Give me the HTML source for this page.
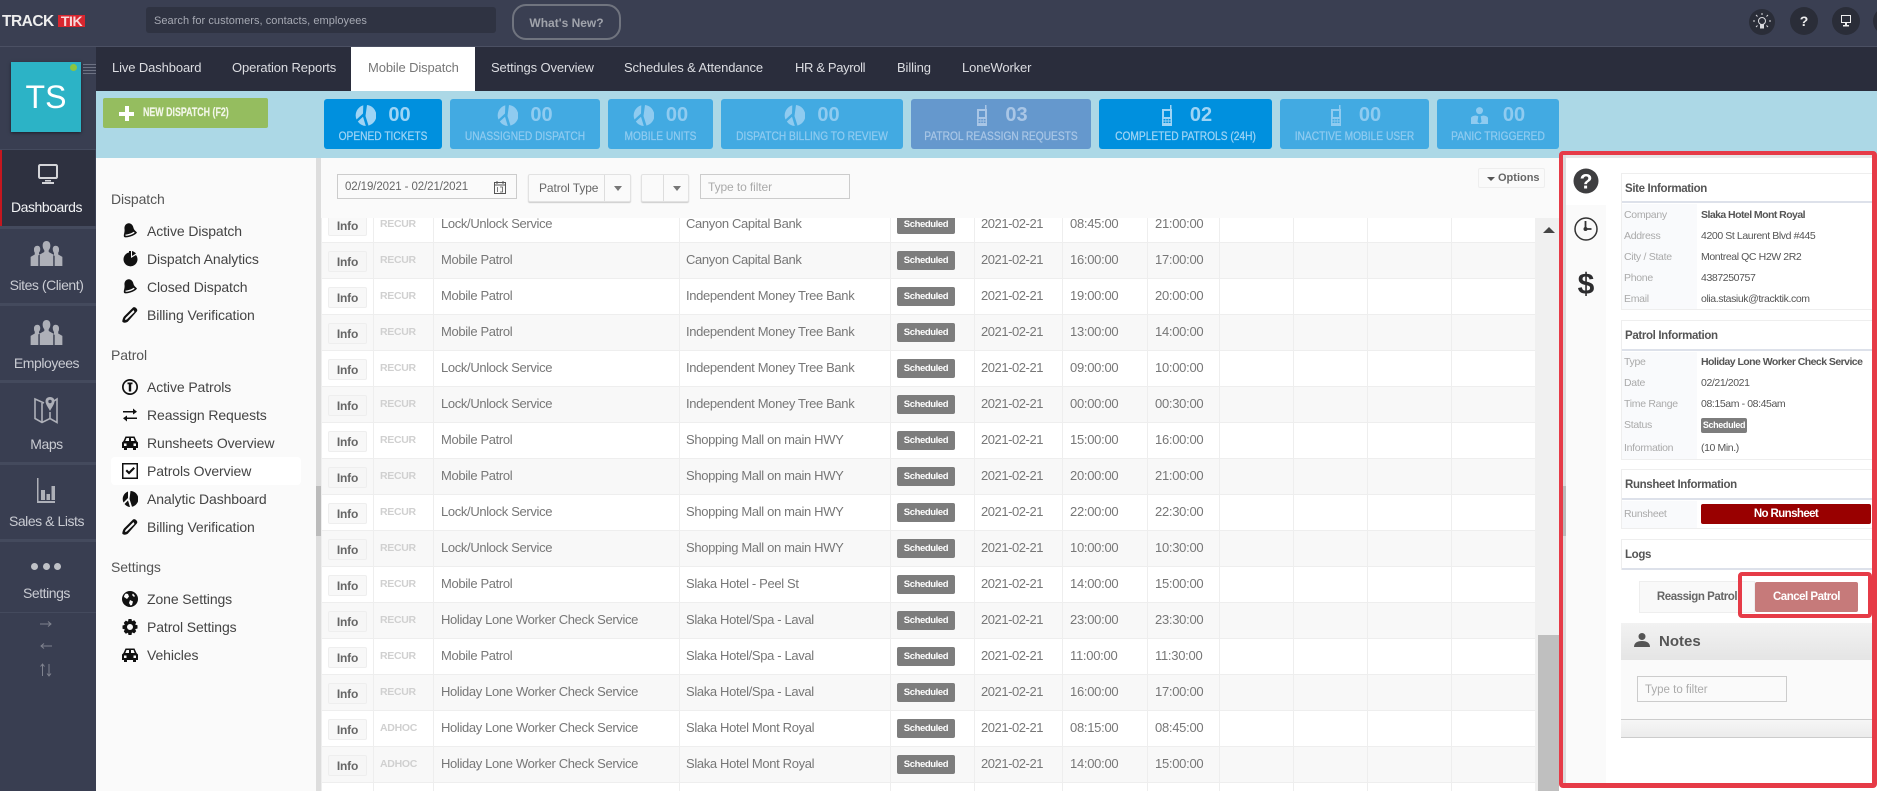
<!DOCTYPE html>
<html><head><meta charset="utf-8"><title>TrackTik Mobile Dispatch</title>
<style>
*{box-sizing:border-box}
html,body{margin:0;padding:0;width:1877px;height:791px;overflow:hidden;background:#fff;font-family:"Liberation Sans",sans-serif}
.a{position:absolute}
.t{position:absolute;white-space:nowrap;line-height:16px}
#top{left:0;top:0;width:1877px;height:47px;background:#3a3f52;border-bottom:1px solid #4b5063}
#nav{left:96px;top:47px;width:1781px;height:44px;background:#2a2d3c}
#nav .t{top:13px;font-size:13px;color:#dcdde2;letter-spacing:-.12px}
#side{left:0;top:47px;width:96px;height:744px;background:#393e51}
.sl{position:absolute;left:0;width:96px;height:3px;background:#444a5d}
.sn{position:absolute;left:0;width:93px;text-align:center;font-size:14px;line-height:16px;color:#c9cbd2;letter-spacing:-.45px}
#band{left:96px;top:91px;width:1781px;height:67px;background:#acd8e6}
.w{position:absolute;top:99px;height:50px;border-radius:3px;background:#42aae2;color:#8fcbf0;text-align:center}
.w.on{background:#0090de;color:#9ed4f5}
.w.g{background:#6598cd;color:#a9c6e6}
.w .r{position:absolute;left:0;right:0;top:5px;height:22px;display:flex;justify-content:center;align-items:center;gap:12px;font-size:20px;font-weight:bold;line-height:22px}
.w .r.p{gap:18px}
.w .r.p svg{margin-left:3px}
.w .l{position:absolute;left:-20px;right:-20px;top:29px;font-size:12px;line-height:16px;white-space:nowrap;transform:scaleX(.85);-webkit-text-stroke:.25px currentColor}
.w svg{fill:currentColor;display:block}
#menu{left:96px;top:158px;width:220px;height:633px;background:#fafafa}
.mh{position:absolute;left:15px;font-size:14px;line-height:16px;color:#555;white-space:nowrap;letter-spacing:-.1px}
.mi{position:absolute;left:51px;font-size:14px;line-height:16px;color:#444;white-space:nowrap;letter-spacing:-.1px}
.ic{position:absolute;left:26px;width:16px;height:16px;fill:#111}
#tb{left:322px;top:218px;width:1213px;height:573px;overflow:hidden;background:#fff}
.row{position:absolute;left:0;width:1213px;height:36px;display:grid;grid-template-columns:52px 60px 246px 211px 84px 88px 85px 72px 74px 74px 84px 83px;grid-template-rows:35px;border-top:1px solid #eee;font-size:13px;color:#777;letter-spacing:-.35px}
.row::before{content:"";border-right:1px solid #eee}
.row.e{background:#f8f8f8}
.row>div{border-right:1px solid #eee;position:relative;white-space:nowrap;line-height:16px;padding-top:9px;padding-left:7px}
.row>div:last-child{border-right:0}
.row>div:nth-child(4){padding-left:6px}
.row>div:nth-child(6){letter-spacing:-.45px;padding-left:6px}
.row>div:nth-child(7),.row>div:nth-child(8){letter-spacing:-.28px}
.row .b{position:absolute;left:6px;top:8px;width:39px;height:21px;background:#f8f8f8;border:1px solid #eee;border-radius:2px;color:#666;font-size:12px;font-weight:bold;line-height:20px;text-align:center;padding:0;letter-spacing:-.2px}
.row.e .b{background:#f6f6f6}
.row .k{font-size:10.5px;font-weight:bold;color:#d0d0d0;letter-spacing:-.3px;padding-left:6px;grid-column:2}
.s{position:absolute;left:6px;top:8px;width:58px;height:19px;background:#7d7d7d;border-radius:2px;color:#fff;font-size:9.5px;font-weight:bold;line-height:20px;text-align:center;letter-spacing:-.4px}
.ctl{position:absolute;background:#fafafa;font-size:12px;color:#666;white-space:nowrap;line-height:16px}
#rp{left:1559px;top:151px;width:318px;height:637px;border:4px solid #e63b47;border-radius:4px;background:#fff;border-right-width:5px;border-bottom-width:5px}
.pn{position:absolute;left:1621px;width:251px;border-left:1px solid #eee;border-top:1px solid #eee;border-bottom:1px solid #eee}
.pt{position:absolute;left:1625px;font-size:11.5px;font-weight:bold;color:#555;line-height:16px;white-space:nowrap;letter-spacing:-.35px}
.lb{position:absolute;left:1624px;font-size:10.5px;color:#aaa;line-height:14px;white-space:nowrap;letter-spacing:-.3px}
.vl{position:absolute;left:1701px;font-size:10.5px;color:#555;line-height:14px;white-space:nowrap;letter-spacing:-.4px}
.vl.bd{font-weight:bold;letter-spacing:-.55px}
.hr{position:absolute;left:1622px;width:250px;height:2px;background:#dde1ea}
.lc{position:absolute;left:1622px;width:75px;background:#f9fafc}
</style></head><body>

<svg width="0" height="0" style="position:absolute">
<defs>
<symbol id="pie" viewBox="0 0 21 21"><path d="M12 0a10.500 10.500 0 0 1 1.500 20.600L10.500 11z"/><path d="M8.300 .3 8 8.500 1.500 14.500A10.500 10.500 0 0 1 8.300 .3z"/><path d="M2.800 16.500 8 11.800 10.800 21a10.500 10.500 0 0 1-8-4.500z"/></symbol>
<symbol id="phone" viewBox="0 0 10 21"><path fill-rule="evenodd" d="M8 0h1.500v4H10v17H0V4h8zM2 6v6h6V6zM1.500 14v1.500h2V14zm2.700 0v1.500h1.700V14zm2.400 0v1.500h2V14zM1.500 16.500V18h2v-1.500zm2.700 0V18h1.700v-1.500zm2.400 0V18h2v-1.500z"/></symbol>
<symbol id="man" viewBox="0 0 21 21"><circle cx="10.500" cy="4.500" r="4.300"/><path d="M0 21v-7c0-2 2-3 6-3.500l3 1-1 7 2.500 2 2.500-2-1-7 3-1c4 .5 6 1.500 6 3.500v7z"/></symbol>
<symbol id="bell" viewBox="0 0 16 16"><path d="M2.500 6C2 2 5-.5 8 .5c2 .6 3 2.200 3.500 4.500.4 1.800 2 3 3.500 4.500-1 1.800-3.500 3-6.500 4-3 1-5.500 1.300-6.500.2C1.200 12 3 9.500 2.500 6z"/><path fill="#fafafa" d="M3.500 11.500c2.500 0 5.500-1 8.200-2.700l1 .9c-2.500 1.800-6.500 3.300-9.200 3z"/></symbol>
<symbol id="pc" viewBox="0 0 16 16"><path d="M9 0v7l5-3a7 7 0 1 1-7-2.500V0z"/><path d="M10 0c2 .5 3 1.500 4 2.500L10 5z"/></symbol>
<symbol id="pen" viewBox="0 0 16 16"><path fill-rule="evenodd" d="M11 .5c1-.8 2.500-.2 3.500 1s1 2.200.3 3L6 14.500c-1 1-3.500 1.500-4.500 1s-1.500-.5-1-2.500 1-3 2-4zM11.500 3 4 10.500c-.8 1-1 1.700-1 2.300.6.200 1.500 0 2-.5L12.500 5z"/></symbol>
<symbol id="info" viewBox="0 0 16 16"><path fill-rule="evenodd" d="M8 0a8 8 0 1 1 0 16A8 8 0 0 1 8 0zm0 1.700a6.300 6.300 0 1 0 0 12.600A6.300 6.300 0 0 0 8 1.700z"/><path d="M5.500 3.500h5v1.800H9.200V12.500H6.800V5.300H5.500z"/></symbol>
<symbol id="swap" viewBox="0 0 16 16"><path d="M1 4h10V1.500L15 4.800 11 7.500V5.500H1zM15 10.500H5V8.500L1 11.300 5 14.500V12h10z"/></symbol>
<symbol id="car" viewBox="0 0 16 16"><path fill-rule="evenodd" d="M3.500 1.500h9L14.500 6 16 7.500V13h-2v2h-3v-2H5v2H2v-2H0V7.500L1.500 6zm1 1.500L3.300 6H7V3zM9 3v3h3.700L11.500 3zM2 8.500V11h2.500V8.500zm9.500 0V11H14V8.500z"/></symbol>
<symbol id="chk" viewBox="0 0 16 16"><path fill-rule="evenodd" d="M0 0h16v16H0zm1.500 1.500v13h13v-13z"/><path d="M3.500 8l1.500-1.500 2 2L11.500 4 13 5.500 7 11.500z"/></symbol>
<symbol id="ana" viewBox="0 0 16 16"><path d="M9 0a8 8 0 0 1 1 15.800L7.500 8l1-8zM6 .5V7l-4.500 4.500A8 8 0 0 1 6 .5z"/><path d="M2.500 13l3.500-3.500 2 6.500a8 8 0 0 1-5.500-3z"/></symbol>
<symbol id="globe" viewBox="0 0 16 16"><path d="M8 0a8 8 0 1 1 0 16A8 8 0 0 1 8 0z"/><path fill="#fafafa" d="M4 2.500 6 3 7 5.500 5 8 2 6c0-1.500 1-3 2-3.500zM8 9l3 1.500-1 3.500-1.500.5L7 12zM11 2.500 13 5l-1 1-2-2z"/></symbol>
<symbol id="gear" viewBox="0 0 16 16"><path fill-rule="evenodd" d="M6.500 0h3l.5 2.300 2.200-1 2 2.200-1 2.100 2.300.6v3.300l-2.300.6 1 2.100-2 2.200-2.200-1L9.500 16h-3L6 13.700l-2.200 1-2-2.200 1-2.100L.5 9.800V6.500l2.300-.6-1-2.100 2-2.200 2.200 1zM8 5a3 3 0 1 0 0 6 3 3 0 0 0 0-6z"/></symbol>
<symbol id="ppl" viewBox="0 0 33 26"><path d="M16.500 0c2.600 0 4 2 4 4.800 0 1.900-.6 3.600-1.700 4.700v2l4.700 2.500V26h-14V14l4.700-2.500v-2c-1.100-1.100-1.700-2.800-1.700-4.700 0-2.800 1.400-4.800 4-4.800z"/><path d="M7 5c2 0 3 1.500 3 3.500 0 1.500-.5 2.800-1.300 3.600v1.400l1 .5-1.700 1V26H0v-9.500L4.300 14v-1.900C3.500 11.300 3.500 10 3.500 8.500 3.500 6.500 5 5 7 5zM26 5c2 0 3.500 1.500 3.500 3.500 0 1.500 0 2.800-.8 3.600V14l4.300 2.500V26h-8V15.500l-1.700-1 1-.5v-1.400C23.500 11.300 23 10 23 8.500 23 6.500 24 5 26 5z"/></symbol>
</defs></svg>

<!-- top bar -->
<div class="a" id="top"></div>
<div class="t" style="left:2px;top:15px;font-size:15.5px;font-weight:bold;color:#eee;letter-spacing:-.5px;line-height:13px">TRACK</div>
<div class="t" style="left:58px;top:15px;width:27px;height:12px;background:#d8262f;color:#f6d8da;font-size:14px;font-weight:bold;line-height:12px;text-align:center;letter-spacing:-.4px">TIK</div>
<div class="a" style="left:146px;top:7px;width:350px;height:26px;background:#2f3342;border-radius:3px"></div>
<div class="t" style="left:154px;top:13px;font-size:11px;color:#a6a9b3;letter-spacing:.05px">Search for customers, contacts, employees</div>
<div class="a" style="left:512px;top:4px;width:109px;height:36px;border:2px solid #70747f;border-radius:14px;color:#a0a3ab;font-size:12px;font-weight:bold;text-align:center;line-height:34px">What's New?</div>
<div class="a" style="left:1749px;top:9px;width:26px;height:26px;border-radius:50%;background:#2a2d38"></div>
<svg class="a" style="left:1752px;top:12px" width="20" height="20" viewBox="0 0 20 20" fill="none" stroke="#d9dade" stroke-width="1"><circle cx="10" cy="9" r="3.500"/><path d="M8.500 13h3v3h-3z" fill="#d9dade"/><path d="M10 1v2M3 9H1M19 9h-2M4 3l1.500 1.500M16 3l-1.500 1.500M4 15l1.500-1.500M16 15l-1.500-1.500"/></svg>
<div class="a" style="left:1790px;top:7px;width:28px;height:28px;border-radius:50%;background:#2a2d38;color:#eee;font-size:14px;font-weight:bold;text-align:center;line-height:28px">?</div>
<div class="a" style="left:1832px;top:7px;width:28px;height:28px;border-radius:50%;background:#2a2d38"></div>
<svg class="a" style="left:1840px;top:15px" width="12" height="12" viewBox="0 0 12 12" fill="#eee"><path fill-rule="evenodd" d="M1 0h10v8H1zm1 1v6h8V1zM3 10h6v1.500H3zM5 8h2v2H5z"/></svg>
<div class="a" style="left:1873px;top:7px;width:28px;height:28px;border-radius:50%;background:#2a2d38"></div>

<!-- nav -->
<div class="a" id="nav">
<div class="t" style="left:16px">Live Dashboard</div>
<div class="t" style="left:136px">Operation Reports</div>
<div class="a" style="left:255px;top:0;width:124px;height:44px;background:#fff"></div>
<div class="t" style="left:272px;color:#777">Mobile Dispatch</div>
<div class="t" style="left:395px">Settings Overview</div>
<div class="t" style="left:528px">Schedules &amp; Attendance</div>
<div class="t" style="left:699px;letter-spacing:-.35px">HR &amp; Payroll</div>
<div class="t" style="left:801px">Billing</div>
<div class="t" style="left:866px">LoneWorker</div>
</div>

<!-- sidebar -->
<div class="a" id="side"></div>
<div class="a" style="left:11px;top:62px;width:70px;height:70px;background:#2cb3c6;box-shadow:0 1px 3px rgba(0,0,0,.5);color:#fff;font-size:32px;line-height:70px;text-align:center">TS</div>
<div class="a" style="left:70px;top:64px;width:7px;height:7px;border-radius:50%;background:#8dc63f"></div>
<div class="a" style="left:83px;top:64px;width:13px;height:10px;background:repeating-linear-gradient(#6d7283 0 1px,#393e51 1px 3px)"></div>
<div class="a" style="left:0;top:149px;width:96px;height:1px;background:#444a5d"></div>
<div class="a" style="left:0;top:150px;width:95px;height:76px;background:#2e3140;border-left:2px solid #c5171f"></div>
<div class="sl" style="top:226px"></div><div class="sl" style="top:303px"></div><div class="sl" style="top:380px"></div><div class="sl" style="top:462px"></div><div class="sl" style="top:539px"></div><div class="a" style="left:0;top:612px;width:96px;height:1px;background:#444a5d"></div>
<svg class="a" style="left:37px;top:163px" width="22" height="22" viewBox="0 0 22 22" fill="#d4d5d9"><path fill-rule="evenodd" d="M3 1h16c1 0 2 1 2 2v11c0 1-1 2-2 2H3c-1 0-2-1-2-2V3c0-1 1-2 2-2zm.500 2C3 3 3 3.500 3 3.500v10c0 .5.500.5.500.5h15s.5 0 .5-.5v-10s0-.5-.5-.5zM8 17h6v1.500H8zM5 19h12v2H5z"/></svg>
<div class="sn" style="top:199px;color:#f2f3f5">Dashboards</div>
<svg class="a" style="left:30px;top:241px;fill:#aeb0b8" width="33" height="25"><use href="#ppl"/></svg>
<div class="sn" style="top:277px">Sites (Client)</div>
<svg class="a" style="left:30px;top:320px;fill:#aeb0b8" width="33" height="25"><use href="#ppl"/></svg>
<div class="sn" style="top:355px">Employees</div>
<svg class="a" style="left:33px;top:397px" width="26" height="27" viewBox="0 0 26 27" fill="none" stroke="#aeb0b8" stroke-width="1.600"><path d="M11 6L2 2V21.500L9 25.500L17 21.500L24 25.500V2L21 4"/><path d="M9 6V25.500M17 15V21.500"/><path fill="#aeb0b8" stroke="none" d="M17 0c3 0 4.500 2 4.500 4.300 0 3-3 6.700-4.500 9.700-1.500-3-4.500-6.700-4.500-9.700C12.500 2 14 0 17 0z"/><circle cx="17" cy="4.500" r="1.700" fill="#393e51" stroke="none"/></svg>
<div class="sn" style="top:436px">Maps</div>
<svg class="a" style="left:36px;top:478px" width="20" height="26" viewBox="0 0 20 26" fill="#aeb0b8"><path d="M1 0h1.500v23H19v2H1z"/><path d="M5 12h4v10H5zM10.500 16h3.500v6h-3.500zM15.500 8H19v14h-3.500z"/></svg>
<div class="sn" style="top:513px">Sales &amp; Lists</div>
<div class="a" style="left:31px;top:563px;width:7px;height:7px;border-radius:50%;background:#bfc1c7"></div>
<div class="a" style="left:43px;top:563px;width:7px;height:7px;border-radius:50%;background:#bfc1c7"></div>
<div class="a" style="left:54px;top:563px;width:7px;height:7px;border-radius:50%;background:#bfc1c7"></div>
<div class="sn" style="top:585px">Settings</div>
<svg class="a" style="left:38px;top:618px" width="16" height="60" viewBox="0 0 16 60" fill="none" stroke="#80838f" stroke-width="1"><path d="M2 6h11M10 3.500 13 6l-3 2.500"/><path d="M14 28H3M6 25.500 3 28l3 2.500"/><path d="M4.500 58V46M2.500 48.500 4.500 46l2 2.500M11 46v12M9 55.500l2 2.500 2-2.500"/></svg>

<!-- band -->
<div class="a" id="band"></div>
<div class="a" style="left:103px;top:98px;width:165px;height:30px;background:#95bd5f;border-radius:2px"></div>
<div class="a" style="left:119px;top:106px;width:15px;height:15px;background:linear-gradient(#fff,#fff) center/100% 4px no-repeat,linear-gradient(#fff,#fff) center/4px 100% no-repeat"></div>
<div class="t" style="left:143px;top:105px;font-size:11.5px;font-weight:bold;color:#f2f6e8;transform:scaleX(.77);transform-origin:left center;-webkit-text-stroke:.2px #f2f6e8">NEW DISPATCH (F2)</div>

<div class="w on" style="left:324px;width:118px"><div class="r"><svg width="21" height="21"><use href="#pie"/></svg>00</div><div class="l">OPENED TICKETS</div></div>
<div class="w" style="left:450px;width:150px"><div class="r"><svg width="21" height="21"><use href="#pie"/></svg>00</div><div class="l">UNASSIGNED DISPATCH</div></div>
<div class="w" style="left:608px;width:105px"><div class="r"><svg width="21" height="21"><use href="#pie"/></svg>00</div><div class="l">MOBILE UNITS</div></div>
<div class="w" style="left:721px;width:182px"><div class="r"><svg width="21" height="21"><use href="#pie"/></svg>00</div><div class="l">DISPATCH BILLING TO REVIEW</div></div>
<div class="w g" style="left:911px;width:180px"><div class="r p"><svg width="10" height="21"><use href="#phone"/></svg>03</div><div class="l">PATROL REASSIGN REQUESTS</div></div>
<div class="w on" style="left:1099px;width:173px"><div class="r p"><svg width="10" height="21"><use href="#phone"/></svg>02</div><div class="l">COMPLETED PATROLS (24H)</div></div>
<div class="w" style="left:1280px;width:149px"><div class="r p"><svg width="10" height="21"><use href="#phone"/></svg>00</div><div class="l">INACTIVE MOBILE USER</div></div>
<div class="w" style="left:1437px;width:122px"><div class="r" style="gap:15px"><svg width="17" height="21"><use href="#man"/></svg>00</div><div class="l">PANIC TRIGGERED</div></div>

<!-- left menu -->
<div class="a" id="menu">
<div class="mh" style="top:33px">Dispatch</div>
<svg class="ic" style="top:65px"><use href="#bell"/></svg><div class="mi" style="top:65px">Active Dispatch</div>
<svg class="ic" style="top:93px"><use href="#pc"/></svg><div class="mi" style="top:93px">Dispatch Analytics</div>
<svg class="ic" style="top:121px"><use href="#bell"/></svg><div class="mi" style="top:121px">Closed Dispatch</div>
<svg class="ic" style="top:149px"><use href="#pen"/></svg><div class="mi" style="top:149px">Billing Verification</div>
<div class="mh" style="top:189px">Patrol</div>
<svg class="ic" style="top:221px"><use href="#info"/></svg><div class="mi" style="top:221px">Active Patrols</div>
<svg class="ic" style="top:249px"><use href="#swap"/></svg><div class="mi" style="top:249px">Reassign Requests</div>
<svg class="ic" style="top:277px"><use href="#car"/></svg><div class="mi" style="top:277px">Runsheets Overview</div>
<div class="a" style="left:15px;top:299px;width:190px;height:28px;background:#fff;border-radius:4px"></div>
<svg class="ic" style="top:305px"><use href="#chk"/></svg><div class="mi" style="top:305px">Patrols Overview</div>
<svg class="ic" style="top:333px"><use href="#ana"/></svg><div class="mi" style="top:333px">Analytic Dashboard</div>
<svg class="ic" style="top:361px"><use href="#pen"/></svg><div class="mi" style="top:361px">Billing Verification</div>
<div class="mh" style="top:401px">Settings</div>
<svg class="ic" style="top:433px"><use href="#globe"/></svg><div class="mi" style="top:433px">Zone Settings</div>
<svg class="ic" style="top:461px"><use href="#gear"/></svg><div class="mi" style="top:461px">Patrol Settings</div>
<svg class="ic" style="top:489px"><use href="#car"/></svg><div class="mi" style="top:489px">Vehicles</div>
</div>
<div class="a" style="left:316px;top:158px;width:5px;height:633px;background:#ddd"></div>
<div class="a" style="left:316px;top:486px;width:5px;height:50px;background:#bbb"></div>

<!-- filter bar -->
<div class="a" style="left:321px;top:158px;width:1238px;height:60px;background:#fafafa"></div>
<div class="ctl" style="left:337px;top:174px;width:180px;height:25px;border:1px solid #ccc;padding:4px 7px;font-size:11.5px;letter-spacing:-.1px">02/19/2021 - 02/21/2021</div>
<svg class="a" style="left:494px;top:181px" width="12" height="13" viewBox="0 0 12 13" fill="none" stroke="#555" stroke-width="1"><rect x=".5" y="1.500" width="11" height="11"/><path d="M.5 4h11M3 0v3M9 0v3"/><path d="M3.500 6v5M6 6h2.500v5H6" stroke-width=".8"/></svg>
<div class="ctl" style="left:528px;top:174px;width:103px;height:28px;border:1px solid #e2e2e2;border-radius:2px;box-shadow:0 1px 1px #ccc;padding:5px 10px;letter-spacing:-.1px">Patrol Type</div>
<div class="a" style="left:604px;top:175px;width:1px;height:26px;background:#ddd"></div>
<div class="a" style="left:614px;top:186px;border:4px solid transparent;border-top:5px solid #777"></div>
<div class="ctl" style="left:641px;top:174px;width:48px;height:28px;border:1px solid #e2e2e2;border-radius:2px;box-shadow:0 1px 1px #ccc"></div>
<div class="a" style="left:663px;top:175px;width:1px;height:26px;background:#ddd"></div>
<div class="a" style="left:673px;top:186px;border:4px solid transparent;border-top:5px solid #777"></div>
<div class="ctl" style="left:700px;top:174px;width:150px;height:25px;border:1px solid #ccc;padding:4px 7px;color:#aaa;letter-spacing:-.1px">Type to filter</div>
<div class="ctl" style="left:1478px;top:168px;width:67px;height:20px;border:1px solid #eee;border-radius:2px;font-size:11px;font-weight:bold;padding:1px 0 0 19px;color:#666">Options</div>
<div class="a" style="left:1487px;top:177px;border:4px solid transparent;border-top:4px solid #555"></div>

<!-- table -->
<div class="a" style="left:321px;top:218px;width:1px;height:573px;background:#eee"></div>
<div class="a" id="tb">
<div class="row" style="top:-12px"><div class="b">Info</div><div class="k">RECUR</div><div>Lock/Unlock Service</div><div>Canyon Capital Bank</div><div><span class="s">Scheduled</span></div><div>2021-02-21</div><div>08:45:00</div><div>21:00:00</div><div></div><div></div><div></div><div></div></div>
<div class="row e" style="top:24px"><div class="b">Info</div><div class="k">RECUR</div><div>Mobile Patrol</div><div>Canyon Capital Bank</div><div><span class="s">Scheduled</span></div><div>2021-02-21</div><div>16:00:00</div><div>17:00:00</div><div></div><div></div><div></div><div></div></div>
<div class="row" style="top:60px"><div class="b">Info</div><div class="k">RECUR</div><div>Mobile Patrol</div><div>Independent Money Tree Bank</div><div><span class="s">Scheduled</span></div><div>2021-02-21</div><div>19:00:00</div><div>20:00:00</div><div></div><div></div><div></div><div></div></div>
<div class="row e" style="top:96px"><div class="b">Info</div><div class="k">RECUR</div><div>Mobile Patrol</div><div>Independent Money Tree Bank</div><div><span class="s">Scheduled</span></div><div>2021-02-21</div><div>13:00:00</div><div>14:00:00</div><div></div><div></div><div></div><div></div></div>
<div class="row" style="top:132px"><div class="b">Info</div><div class="k">RECUR</div><div>Lock/Unlock Service</div><div>Independent Money Tree Bank</div><div><span class="s">Scheduled</span></div><div>2021-02-21</div><div>09:00:00</div><div>10:00:00</div><div></div><div></div><div></div><div></div></div>
<div class="row e" style="top:168px"><div class="b">Info</div><div class="k">RECUR</div><div>Lock/Unlock Service</div><div>Independent Money Tree Bank</div><div><span class="s">Scheduled</span></div><div>2021-02-21</div><div>00:00:00</div><div>00:30:00</div><div></div><div></div><div></div><div></div></div>
<div class="row" style="top:204px"><div class="b">Info</div><div class="k">RECUR</div><div>Mobile Patrol</div><div>Shopping Mall on main HWY</div><div><span class="s">Scheduled</span></div><div>2021-02-21</div><div>15:00:00</div><div>16:00:00</div><div></div><div></div><div></div><div></div></div>
<div class="row e" style="top:240px"><div class="b">Info</div><div class="k">RECUR</div><div>Mobile Patrol</div><div>Shopping Mall on main HWY</div><div><span class="s">Scheduled</span></div><div>2021-02-21</div><div>20:00:00</div><div>21:00:00</div><div></div><div></div><div></div><div></div></div>
<div class="row" style="top:276px"><div class="b">Info</div><div class="k">RECUR</div><div>Lock/Unlock Service</div><div>Shopping Mall on main HWY</div><div><span class="s">Scheduled</span></div><div>2021-02-21</div><div>22:00:00</div><div>22:30:00</div><div></div><div></div><div></div><div></div></div>
<div class="row e" style="top:312px"><div class="b">Info</div><div class="k">RECUR</div><div>Lock/Unlock Service</div><div>Shopping Mall on main HWY</div><div><span class="s">Scheduled</span></div><div>2021-02-21</div><div>10:00:00</div><div>10:30:00</div><div></div><div></div><div></div><div></div></div>
<div class="row" style="top:348px"><div class="b">Info</div><div class="k">RECUR</div><div>Mobile Patrol</div><div>Slaka Hotel - Peel St</div><div><span class="s">Scheduled</span></div><div>2021-02-21</div><div>14:00:00</div><div>15:00:00</div><div></div><div></div><div></div><div></div></div>
<div class="row e" style="top:384px"><div class="b">Info</div><div class="k">RECUR</div><div>Holiday Lone Worker Check Service</div><div>Slaka Hotel/Spa - Laval</div><div><span class="s">Scheduled</span></div><div>2021-02-21</div><div>23:00:00</div><div>23:30:00</div><div></div><div></div><div></div><div></div></div>
<div class="row" style="top:420px"><div class="b">Info</div><div class="k">RECUR</div><div>Mobile Patrol</div><div>Slaka Hotel/Spa - Laval</div><div><span class="s">Scheduled</span></div><div>2021-02-21</div><div>11:00:00</div><div>11:30:00</div><div></div><div></div><div></div><div></div></div>
<div class="row e" style="top:456px"><div class="b">Info</div><div class="k">RECUR</div><div>Holiday Lone Worker Check Service</div><div>Slaka Hotel/Spa - Laval</div><div><span class="s">Scheduled</span></div><div>2021-02-21</div><div>16:00:00</div><div>17:00:00</div><div></div><div></div><div></div><div></div></div>
<div class="row" style="top:492px"><div class="b">Info</div><div class="k">ADHOC</div><div>Holiday Lone Worker Check Service</div><div>Slaka Hotel Mont Royal</div><div><span class="s">Scheduled</span></div><div>2021-02-21</div><div>08:15:00</div><div>08:45:00</div><div></div><div></div><div></div><div></div></div>
<div class="row e" style="top:528px"><div class="b">Info</div><div class="k">ADHOC</div><div>Holiday Lone Worker Check Service</div><div>Slaka Hotel Mont Royal</div><div><span class="s">Scheduled</span></div><div>2021-02-21</div><div>14:00:00</div><div>15:00:00</div><div></div><div></div><div></div><div></div></div>
<div class="row" style="top:564px"><div></div><div></div><div></div><div></div><div></div><div></div><div></div><div></div><div></div><div></div><div></div></div>
</div>

<!-- table scrollbar -->
<div class="a" style="left:1535px;top:218px;width:24px;height:573px;background:#f0f0f0"></div>
<div class="a" style="left:1538px;top:635px;width:21px;height:156px;background:#bfbfbf"></div>
<div class="a" style="left:1543px;top:227px;border:6px solid transparent;border-bottom:6px solid #444;border-top:0"></div>

<!-- right panel -->
<div class="a" id="rp"></div>
<div class="a" style="left:1563px;top:155px;width:309px;height:3px;background:#e6e6e6"></div>
<div class="a" style="left:1563px;top:155px;width:3px;height:628px;background:#ddd"></div>
<div class="a" style="left:1563px;top:486px;width:3px;height:50px;background:#bbb"></div>
<div class="a" style="left:1566px;top:205px;width:40px;height:578px;background:#fafafa"></div>
<svg class="a" style="left:1573px;top:168px" width="26" height="26" viewBox="0 0 26 26"><circle cx="13" cy="13" r="12.500" fill="#3e3e40"/><text x="13" y="20.500" text-anchor="middle" font-family="Liberation Sans" font-weight="bold" font-size="21" fill="#fff">?</text></svg>
<svg class="a" style="left:1574px;top:217px" width="24" height="24" viewBox="0 0 24 24" fill="none" stroke="#333" stroke-width="1.500"><circle cx="12" cy="12" r="11"/><path d="M11.500 4v8h6" stroke-width="1.800"/><circle cx="11.500" cy="12" r="2" fill="#333" stroke="none"/></svg>
<div class="a" style="left:1574px;top:268px;width:24px;font-size:30px;font-weight:bold;color:#2c2c2e;text-align:center;line-height:34px">$</div>

<div class="pn" style="top:173px;height:137px"></div>
<div class="lc" style="top:204px;height:105px"></div>
<div class="hr" style="top:201px"></div>
<div class="pt" style="top:181px">Site Information</div>
<div class="lb" style="top:208px">Company</div><div class="vl bd" style="top:208px">Slaka Hotel Mont Royal</div>
<div class="lb" style="top:229px">Address</div><div class="vl" style="top:229px">4200 St Laurent Blvd #445</div>
<div class="lb" style="top:250px">City / State</div><div class="vl" style="top:250px">Montreal QC H2W 2R2</div>
<div class="lb" style="top:271px">Phone</div><div class="vl" style="top:271px">4387250757</div>
<div class="lb" style="top:292px">Email</div><div class="vl" style="top:292px">olia.stasiuk@tracktik.com</div>

<div class="pn" style="top:320px;height:140px"></div>
<div class="lc" style="top:352px;height:107px"></div>
<div class="hr" style="top:349px"></div>
<div class="pt" style="top:328px">Patrol Information</div>
<div class="lb" style="top:355px">Type</div><div class="vl bd" style="top:355px">Holiday Lone Worker Check Service</div>
<div class="lb" style="top:376px">Date</div><div class="vl" style="top:376px">02/21/2021</div>
<div class="lb" style="top:397px">Time Range</div><div class="vl" style="top:397px">08:15am - 08:45am</div>
<div class="lb" style="top:418px">Status</div><div class="a" style="left:1701px;top:418px;width:46px;height:15px;background:#7d7d7d;border-radius:2px;color:#fff;font-size:9px;font-weight:bold;text-align:center;line-height:15px;letter-spacing:-.35px">Scheduled</div>
<div class="lb" style="top:441px">Information</div><div class="vl" style="top:441px">(10 Min.)</div>

<div class="pn" style="top:469px;height:60px"></div>
<div class="lc" style="top:501px;height:27px"></div>
<div class="hr" style="top:498px"></div>
<div class="pt" style="top:477px">Runsheet Information</div>
<div class="lb" style="top:507px">Runsheet</div>
<div class="a" style="left:1701px;top:504px;width:170px;height:20px;background:#990000;border-radius:2px;color:#fff;font-size:11.5px;font-weight:bold;text-align:center;line-height:20px;letter-spacing:-.6px">No Runsheet</div>

<div class="a" style="left:1621px;top:539px;width:251px;height:31px;border-left:1px solid #eee;border-top:1px solid #eee"></div>
<div class="hr" style="top:568px"></div>
<div class="pt" style="top:547px">Logs</div>

<div class="a" style="left:1639px;top:581px;width:116px;height:32px;background:#f9f9f9;border:1px solid #eee;color:#666;font-size:11.500px;font-weight:bold;text-align:center;line-height:30px;white-space:nowrap;letter-spacing:-.45px">Reassign Patrol</div>
<div class="a" style="left:1755px;top:582px;width:103px;height:30px;background:#c67a7a;border-radius:2px;color:#fff;font-size:11.500px;font-weight:bold;text-align:center;line-height:30px;letter-spacing:-.5px">Cancel Patrol</div>
<div class="a" style="left:1738px;top:572px;width:134px;height:46px;border:4px solid #e63b47;border-radius:4px"></div>

<div class="a" style="left:1621px;top:623px;width:251px;height:37px;background:linear-gradient(#f2f2f2,#e5e5e5)"></div>
<svg class="a" style="left:1634px;top:633px" width="16" height="14" viewBox="0 0 16 14" fill="#555"><circle cx="8" cy="3.500" r="3.500"/><path d="M0 14c0-4 3-6 8-6s8 2 8 6z"/></svg>
<div class="t" style="left:1659px;top:633px;font-size:15px;font-weight:bold;color:#555;line-height:18px">Notes</div>
<div class="a" style="left:1621px;top:660px;width:251px;height:60px;background:#fafafa;border-bottom:1px solid #ccc"></div>
<div class="a" style="left:1637px;top:676px;width:150px;height:26px;background:#fafafa;border:1px solid #ccc;color:#aaa;font-size:11.500px;line-height:26px;padding-left:7px">Type to filter</div>
<div class="a" style="left:1621px;top:720px;width:251px;height:18px;background:linear-gradient(#f6f6f6,#ececec);border-bottom:1px solid #ccc"></div>
</body></html>
